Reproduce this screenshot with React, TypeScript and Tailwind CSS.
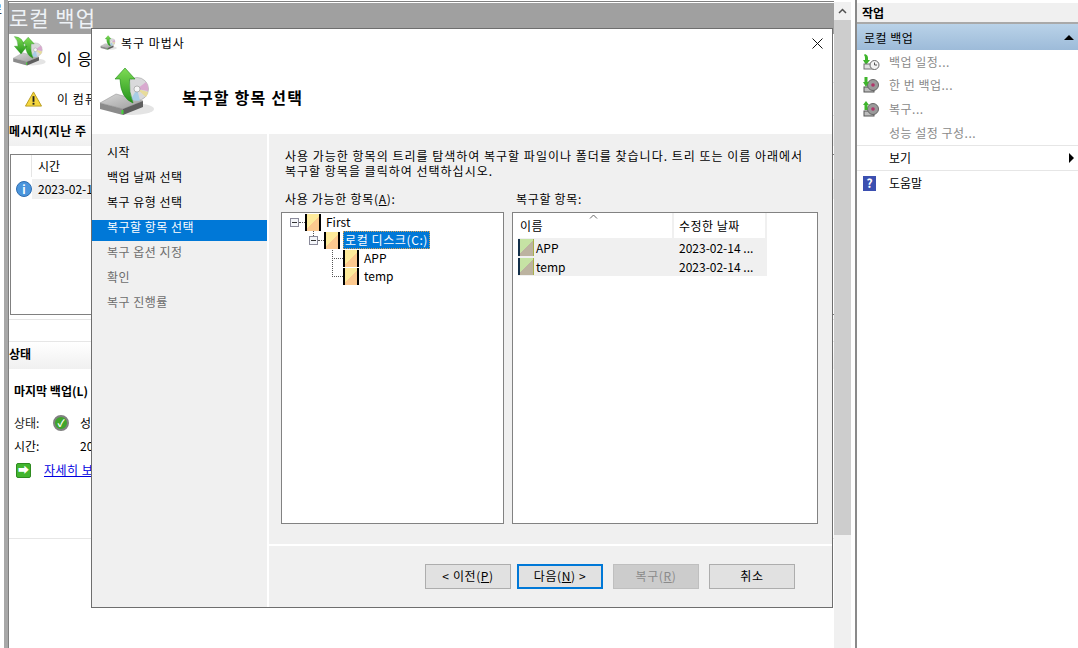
import { ReactNode } from 'react';

const font = { fontFamily: '"Noto Sans CJK KR", "Liberation Sans", sans-serif' };

// backup drive icon, drawn at its size in the wizard header (viewBox is 60x60)
const DriveIcon = ({ size = 60, id, both }: { size?: number; id: string; both?: boolean }) => (
  <svg width={size} height={size} viewBox="98 65 60 60">
    <defs>
      <linearGradient id={`${id}-arrow`} x1="0" y1="0" x2="0" y2="1">
        <stop offset="0" stopColor="#7fdc55" />
        <stop offset="1" stopColor="#23931a" />
      </linearGradient>
      <linearGradient id={`${id}-top`} x1="0" y1="0" x2="1" y2="1">
        <stop offset="0" stopColor="#d8d8d8" />
        <stop offset="1" stopColor="#9c9c9c" />
      </linearGradient>
    </defs>
    <ellipse cx="132" cy="108" rx="22" ry="6" fill="#e4e4e4" />
    <polygon points="100,102 116,93 143,100 123,108" fill={`url(#${id}-top)`} stroke="#8d8d8d" strokeWidth=".5" />
    <polygon points="100,102 123,108 123,114 100,108" fill="#8b8b8b" />
    <polygon points="123,108 143,100 143,106 123,114" fill="#5f5f5f" />
    <rect x="121.500" y="109" width="2" height="4" fill="#46d23a" />
    <circle cx="137" cy="88" r="11.500" fill="#d9d9db" stroke="#a2a2a2" strokeWidth=".6" />
    <path d="M137 88L146 81a11.500 11.500 0 0 1 2 9z" fill="#d9a9cf" />
    <path d="M137 88L131 98a11.500 11.500 0 0 0 9 1.500z" fill="#a8cde6" />
    <path d="M137 88L146 96a11.500 11.500 0 0 0 2-5z" fill="#e8dc9a" />
    <circle cx="137" cy="88" r="3" fill="#f6f6f6" stroke="#8f8f8f" strokeWidth=".6" />
    <path d="M125 67L135 78H129.500Q128.500 91 133 102Q120.500 97 120 78H115z" fill={`url(#${id}-arrow)`} stroke="#1f8a17" strokeWidth=".6" />
    {both && (
      <path d="M102 66Q117 67 118 82H123L113 95L102 82H108Q108 72 102 66z" fill={`url(#${id}-arrow)`} stroke="#1f8a17" strokeWidth=".6" />
    )}
  </svg>
);

const ClockIcon = () => (
  <svg width="18" height="18" viewBox="0 0 18 18">
    <path d="M3 1q3 1 3 4v2h2l-4 5-3-5h2V5q0-2-1-3z" fill="#3fb52c" />
    <rect x="2" y="11" width="9" height="5" fill="#e0e0e0" stroke="#707070" />
    <circle cx="12.500" cy="12" r="4.500" fill="#f3f3f3" stroke="#6a6a6a" />
    <path d="M12.500 9.500V12H15" stroke="#555" fill="none" />
  </svg>
);

const SmallDisc = ({ up }: { up?: boolean }) => (
  <svg width="18" height="18" viewBox="0 0 18 18">
    <rect x="2" y="11" width="10" height="5" fill="#bdbdbd" stroke="#555" />
    <circle cx="11" cy="9" r="5.500" fill="#9a9a9a" stroke="#666" />
    <circle cx="11" cy="9" r="1.800" fill="#b0356a" />
    <path d={up ? 'M4 1l3 4H5.500v5h-3V5H1z' : 'M2.500 1h3v5H7l-3 5-3-5h1.500z'} fill="#3fb52c" />
  </svg>
);

// folder thumbnails are glitchy in the capture: bars on the sides and a hard diagonal
const TreeFolder = () => (
  <span className="h-[17px] w-4 shrink-0 border-l-2 border-r-2 border-l-black border-r-black bg-[linear-gradient(135deg,#fdea9a_50%,#fcc98f_50%)]" />
);

const ListFolder = () => (
  <span className="h-[17px] w-4 shrink-0 border-l-2 border-r border-l-[#14304a] border-r-[#a9b04a] bg-[linear-gradient(135deg,#c6e3a4_50%,#bcb3a0_50%)]" />
);

const Expander = () => (
  <span className="flex h-[9px] w-[9px] shrink-0 items-center justify-center border border-[#8a8a9a] bg-[#f4f6fa]">
    <span className="h-px w-[5px] bg-[#333]" />
  </span>
);

const Underlined = ({ children }: { children: ReactNode }) => <span className="underline">{children}</span>;

const Background = () => (
  <div className="flex h-[648px] w-[1078px] overflow-hidden bg-white text-[12px] text-black">
    {/* sliver of the tree pane on the far left */}
    <div className="w-[4px] shrink-0 overflow-hidden pt-[1px] leading-4">
      <span className="-ml-[9px] block">로</span>
    </div>
    <div className="w-[4px] shrink-0 bg-[#a8a8a8]" />

    <div className="mt-[1px] flex w-[826px] shrink-0 flex-col overflow-hidden border-l border-t border-[#808080] pt-[1px]">
      <div className="h-[31px] shrink-0 overflow-hidden whitespace-nowrap bg-[#a0a0a0] text-[21px] leading-[29px] tracking-[1px] text-[#eef2f6]">
        <span className="block">로컬 백업</span>
      </div>

      <div className="flex h-[49px] shrink-0 items-center gap-[9px] border-b border-b-[#e6e6e6] pl-[3px]">
        <span className="-mt-[9px]">
          <DriveIcon size={36} id="page" both />
        </span>
        <span className="text-[16px] tracking-[1px]">이 응용</span>
      </div>

      <div className="flex h-[33px] shrink-0 items-center gap-[15px] border-b border-b-[#e6e6e6] pl-[16px]">
        <svg width="17" height="16" viewBox="0 0 18 16">
          <path d="M9 .5L17.500 15.500H.5z" fill="#f5d63d" stroke="#b79a1e" />
          <rect x="8" y="5" width="2" height="6" fill="#222" />
          <rect x="8" y="12" width="2" height="2" fill="#222" />
        </svg>
        <span className="tracking-[1px]">이 컴퓨터</span>
      </div>

      <div className="flex h-[30px] shrink-0 items-center whitespace-nowrap bg-gradient-to-b from-white to-[#f0f0f0] pb-[1px] font-semibold tracking-[.5px]">메시지(지난 주</div>

      <div className="h-[8px] shrink-0" />

      <div className="ml-[1px] h-[161px] shrink-0 border border-r-0 border-[#808080]">
        <div className="flex h-[24px] items-start pl-[20px]">
          <span className="border-l border-l-[#e5e5e5] pl-[6px] leading-[22px]">시간</span>
        </div>
        <div className="relative ml-[21px] flex h-[20px] items-center bg-[#f0f0f0] pl-[6px]">
          2023-02-14
          <span className="absolute left-[-16px] top-[2px] flex h-4 w-4 items-center justify-center rounded-full border border-[#2f6db0] bg-[#4b95dc] text-[11px] font-bold leading-none text-white">i</span>
        </div>
      </div>

      <div className="h-[4px] shrink-0" />
      <div className="h-[22px] shrink-0 border-t border-t-[#e6e6e6]" />

      <div className="flex h-[28px] shrink-0 items-center whitespace-nowrap border-t border-t-[#e6e6e6] bg-gradient-to-b from-white to-[#f0f0f0] pb-[3px] font-semibold">상태</div>

      <div className="h-[170px] shrink-0 border-b border-b-[#e6e6e6] pl-[5px] pt-[13px]">
        <div className="whitespace-nowrap font-semibold leading-[18px]">마지막 백업(L)</div>
        <div className="mt-[13px] flex h-[20px] items-center">
          <span className="w-[39px] text-[#222]">상태:</span>
          <span className="flex h-[16px] w-[16px] items-center justify-center rounded-full border-2 border-[#808080] bg-[#3fa52c] text-[10px] font-bold leading-none text-white">✓</span>
          <span className="ml-[11px]">성공</span>
        </div>
        <div className="mt-[3px] flex h-[20px] items-center">
          <span className="w-[66px]">시간:</span>
          <span>2023</span>
        </div>
        <div className="ml-[2px] mt-[4px] flex h-[20px] items-center">
          <span className="flex h-[15px] w-[15px] items-center justify-center rounded-[2px] border border-[#2f8a20] bg-[#42b52e] pb-[1px] text-[11px] font-bold leading-none text-white">➡</span>
          <span className="ml-[13px] whitespace-nowrap tracking-[.5px] text-[#0000e0] underline">자세히 보기</span>
        </div>
      </div>
    </div>

    {/* scrollbar */}
    <div className="mt-[2px] flex w-[17px] shrink-0 flex-col bg-[#f0f0f0]">
      <div className="flex h-[18px] items-center justify-center">
        <svg width="9" height="6" viewBox="0 0 9 6"><path d="M1 5l3.500-3.500L8 5" stroke="#505050" strokeWidth="1.500" fill="none" /></svg>
      </div>
      <div className="h-[515px] bg-[#cdcdcd]" />
    </div>

    <div className="w-[4px] shrink-0 bg-white" />

    {/* actions pane */}
    <div className="flex min-w-0 flex-1 flex-col border-l-2 border-l-[#8a8a8a] pt-[3px]">
      <div className="flex h-[21px] items-center border-b-2 border-b-[#a9a9a9] bg-[#f0f0f0] pl-[5px] font-semibold">작업</div>
      <div className="flex h-[26px] items-center justify-between bg-gradient-to-b from-[#b9d2e8] to-[#9dbbd9] pl-[7px] pr-[4px] pt-[1px]">
        <span className="tracking-[.5px]">로컬 백업</span>
        <svg width="10" height="5" viewBox="0 0 10 5"><path d="M5 0l5 5H0z" fill="#000" /></svg>
      </div>
      <div className="flex h-[23px] items-center pl-[5px] text-[#8a8a8a]"><ClockIcon /><span className="ml-[9px] tracking-[.5px]">백업 일정...</span></div>
      <div className="flex h-[24px] items-center pl-[5px] text-[#8a8a8a]"><SmallDisc /><span className="ml-[9px] tracking-[.5px]">한 번 백업...</span></div>
      <div className="flex h-[24px] items-center pl-[5px] text-[#8a8a8a]"><SmallDisc up /><span className="ml-[9px] tracking-[.5px]">복구...</span></div>
      <div className="flex h-[24px] items-center pl-[32px] tracking-[.5px] text-[#8a8a8a]">성능 설정 구성...</div>
      <div className="flex h-[26px] items-center justify-between border-y border-y-[#e6e6e6] pl-[32px] pr-[4px]">
        <span>보기</span>
        <svg width="5" height="10" viewBox="0 0 5 10"><path d="M0 0l5 5-5 5z" fill="#000" /></svg>
      </div>
      <div className="flex h-[24px] items-center pl-[6px]">
        <span className="flex h-[15px] w-[13px] items-center justify-center bg-[#3b4fb0] text-[12px] font-bold leading-none text-white">?</span>
        <span className="ml-[13px]">도움말</span>
      </div>
    </div>
  </div>
);

const Wizard = () => (
  <div className="absolute left-[91px] top-[28px] flex h-[580px] w-[742px] flex-col border border-[#6e6e6e] bg-white text-[12px] text-black">
    <div className="flex h-[29px] shrink-0 items-center justify-between pl-[8px] pr-[9px]">
      <div className="flex items-center gap-[3px]">
        <DriveIcon size={18} id="title" />
        <span className="-mt-[1px] tracking-[1px]">복구 마법사</span>
      </div>
      <svg width="11" height="11" viewBox="0 0 11 11"><path d="M.5.5l10 10M10.500.5l-10 10" stroke="#111" /></svg>
    </div>

    <div className="flex h-[76px] shrink-0 items-center gap-[24px] pl-[6px]">
      <DriveIcon size={60} id="head" />
      <span className="mt-[1px] text-[16px] font-semibold tracking-[1.2px]">복구할 항목 선택</span>
    </div>

    <div className="flex min-h-0 flex-1 bg-[#f0f0f0]">
      {/* steps */}
      <div className="w-[177px] shrink-0 border-r-2 border-r-white pt-[5px] tracking-[.5px]">
        <div className="flex h-[25px] items-center pl-[15px]">시작</div>
        <div className="flex h-[25px] items-center pl-[15px]">백업 날짜 선택</div>
        <div className="flex h-[25px] items-center pl-[15px]">복구 유형 선택</div>
        <div className="mt-[6px] h-[21px] bg-[#0078d7] pl-[15px] leading-[13px] text-white">복구할 항목 선택</div>
        <div className="flex h-[22px] items-center pl-[15px] text-[#6d6d6d]">복구 옵션 지정</div>
        <div className="flex h-[25px] items-center pl-[15px] pt-[3px] text-[#6d6d6d]">확인</div>
        <div className="flex h-[25px] items-center pl-[15px] pt-[3px] text-[#6d6d6d]">복구 진행률</div>
      </div>

      <div className="flex min-w-0 flex-1 flex-col">
        <div className="flex min-h-0 flex-1 flex-col border-b-2 border-b-white pl-[12px] pr-[14px] pt-[14px]">
          <p className="whitespace-nowrap pl-[4px] leading-[15px] tracking-[1px]">
            사용 가능한 항목의 트리를 탐색하여 복구할 파일이나 폴더를 찾습니다. 트리 또는 이름 아래에서
            <br />
            복구할 항목을 클릭하여 선택하십시오.
          </p>
          <div className="mt-[12px] flex gap-[8px]">
            <div className="w-[223px] shrink-0">
              <div className="pl-[4px] leading-[18px] tracking-[.7px]">
                사용 가능한 항목(<Underlined>A</Underlined>):
              </div>
              <div className="relative mt-[4px] h-[312px] border border-[#828282] bg-white pl-[8px]">
                <span className="absolute left-[31px] top-[18px] h-[5px] border-l border-dotted border-l-[#555]" />
                <span className="absolute left-[50px] top-[37px] h-[27px] border-l border-dotted border-l-[#555]" />
                <div className="flex h-[18px] items-center">
                  <Expander />
                  <span className="w-[6px] border-t border-dotted border-t-[#555]" />
                  <TreeFolder />
                  <span className="ml-[5px]">First</span>
                </div>
                <div className="flex h-[18px] items-center pl-[19px]">
                  <Expander />
                  <span className="w-[6px] border-t border-dotted border-t-[#555]" />
                  <TreeFolder />
                  <span className="ml-[3px] whitespace-nowrap border border-dotted border-[#d8a050] bg-[#0078d7] px-[1px] leading-[16px] tracking-[.6px] text-white">로컬 디스크(C:)</span>
                </div>
                <div className="flex h-[18px] items-center pl-[42px]">
                  <span className="w-[11px] border-t border-dotted border-t-[#555]" />
                  <TreeFolder />
                  <span className="ml-[5px]">APP</span>
                </div>
                <div className="flex h-[18px] items-center pl-[42px]">
                  <span className="w-[11px] border-t border-dotted border-t-[#555]" />
                  <TreeFolder />
                  <span className="ml-[5px]">temp</span>
                </div>
              </div>
            </div>

            <div className="min-w-0 flex-1">
              <div className="pl-[4px] leading-[18px] tracking-[.7px]">복구할 항목:</div>
              <div className="mt-[4px] h-[312px] border border-[#828282] bg-white">
                <div className="relative flex h-[25px]">
                  <svg className="absolute left-[76px] top-[1px]" width="9" height="5" viewBox="0 0 9 5">
                    <path d="M1 4.500l3.500-3.500L8 4.500" stroke="#666" fill="none" />
                  </svg>
                  <div className="flex w-[161px] items-center border-r-2 border-r-[#f0f0f0] pl-[7px] tracking-[.5px]">이름</div>
                  <div className="flex w-[93px] items-center border-r-2 border-r-[#f0f0f0] pl-[5px] tracking-[.5px]">수정한 날짜</div>
                </div>
                <div className="ml-[5px] flex h-[19px] w-[249px] items-center bg-[#f0f0f0]">
                  <ListFolder />
                  <span className="ml-[2px] w-[143px]">APP</span>
                  <span className="whitespace-nowrap">2023-02-14 ...</span>
                </div>
                <div className="ml-[5px] flex h-[19px] w-[249px] items-center bg-[#f0f0f0]">
                  <ListFolder />
                  <span className="ml-[2px] w-[143px]">temp</span>
                  <span className="whitespace-nowrap">2023-02-14 ...</span>
                </div>
              </div>
            </div>
          </div>
        </div>

        <div className="flex h-[61px] shrink-0 items-start justify-end pr-[37px] pt-[18px] tracking-[.6px]">
          <button className="h-[25px] w-[86px] border border-[#adadad] bg-[#e1e1e1] pb-[1px]">&lt; 이전(<Underlined>P</Underlined>)</button>
          <button className="ml-[6px] h-[25px] w-[86px] border-2 border-[#0078d7] bg-[#e1e1e1] pb-[1px]">다음(<Underlined>N</Underlined>) &gt;</button>
          <button className="ml-[10px] h-[25px] w-[86px] border border-[#bfbfbf] bg-[#cccccc] pb-[1px] text-[#8a8a8a]">복구(<Underlined>R</Underlined>)</button>
          <button className="ml-[10px] h-[25px] w-[86px] border border-[#adadad] bg-[#e1e1e1] pb-[1px]">취소</button>
        </div>
      </div>
    </div>
  </div>
);

export default function App() {
  return (
    <div className="relative h-[648px] w-[1078px] overflow-hidden" style={font}>
      <Background />
      <Wizard />
    </div>
  );
}
